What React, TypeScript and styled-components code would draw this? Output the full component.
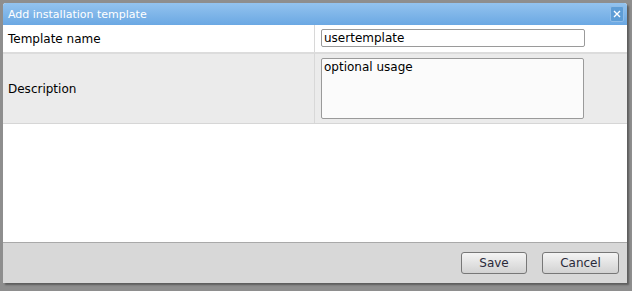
import React from "react";
import styled, { createGlobalStyle } from "styled-components";

const Global = createGlobalStyle`
  html, body { margin: 0; padding: 0; }
  body { width: 632px; height: 291px; overflow: hidden; background: #8f8f8f; font-family: "DejaVu Sans", Verdana, sans-serif; }
`;

const Backdrop = styled.div`
  width: 632px;
  height: 291px;
  padding: 3px 5px 0 3px;
  box-sizing: border-box;
  background: #8e8e8e;
`;

const Dialog = styled.div`
  width: 624px;
  height: 280px;
  background: #fff;
  display: flex;
  flex-direction: column;
  border-radius: 3px 3px 0 0;
  box-shadow: 2px 2px 2px rgba(0, 0, 0, 0.35);
  overflow: hidden;
`;

const TitleBar = styled.div`
  height: 22px;
  flex: none;
  display: flex;
  align-items: center;
  justify-content: space-between;
  padding: 0 3px 0 5px;
  background: linear-gradient(#93c3ef, #6ba8e3);
  color: #fff;
  font-size: 11px;
`;

const CloseBtn = styled.div`
  width: 12px;
  height: 14px;
  border-radius: 2px;
  background: #5e9dd6;
  border: 1px solid #8fbde8;
  display: flex;
  align-items: center;
  justify-content: center;
`;

const Table = styled.div`
  display: grid;
  grid-template-columns: 312px 1fr;
  border-bottom: 1px solid #d6d6d6;
`;

const Cell = styled.div<{ $gray?: boolean; $h: number; $label?: boolean }>`
  height: ${(p) => p.$h}px;
  box-sizing: border-box;
  background: ${(p) => (p.$gray ? "#ebebeb" : "#fff")};
  border-top: ${(p) => (p.$gray ? "2px solid #dcdcdc" : "none")};
  border-right: ${(p) => (p.$label ? "1px solid #d8d8d8" : "none")};
  display: flex;
  align-items: ${(p) => (p.$label ? "center" : "flex-start")};
  padding: ${(p) => (p.$label ? "0 0 0 5px" : "4px 0 0 6px")};
  font-size: 12px;
  color: #000;
`;

const TextInput = styled.div`
  width: 264px;
  height: 18px;
  box-sizing: border-box;
  border: 1px solid #9a9a9a;
  border-radius: 2px;
  padding: 0 0 0 2px;
  font-size: 12px;
  line-height: 16px;
  background: #fff;
`;

const TextArea = styled.div`
  width: 263px;
  height: 61px;
  box-sizing: border-box;
  border: 1px solid #9a9a9a;
  border-radius: 2px;
  padding: 0 0 0 2px;
  font-size: 12px;
  line-height: 16px;
  background: #fbfbfb;
`;

const Spacer = styled.div`
  flex: 1;
`;

const Footer = styled.div`
  height: 41px;
  flex: none;
  box-sizing: border-box;
  border-top: 1px solid #a9a9a9;
  background: #d8d8d8;
  display: flex;
  justify-content: flex-end;
  align-items: flex-start;
  gap: 15px;
  padding: 9px 8px 0 0;
`;

const Button = styled.button<{ $w: number }>`
  width: ${(p) => p.$w}px;
  height: 22px;
  border: 1px solid #777;
  border-radius: 3px;
  background: linear-gradient(#f4f4f4, #d2d2d2);
  font-family: "DejaVu Sans", Verdana, sans-serif;
  font-size: 12px;
  color: #2a2a3a;
  padding: 0;
`;

export default function App() {
  return (
    <>
      <Global />
      <Backdrop>
        <Dialog>
          <TitleBar>
            <span>Add installation template</span>
            <CloseBtn>
              <svg width="8" height="8" viewBox="0 0 8 8">
                <path d="M1 1L7 7M7 1L1 7" stroke="#fff" strokeWidth="1.4" />
              </svg>
            </CloseBtn>
          </TitleBar>
          <Table>
            <Cell $h={27} $label>Template name</Cell>
            <Cell $h={27}><TextInput>usertemplate</TextInput></Cell>
            <Cell $h={71} $gray $label>Description</Cell>
            <Cell $h={71} $gray><TextArea>optional usage</TextArea></Cell>
          </Table>
          <Spacer />
          <Footer>
            <Button $w={66}>Save</Button>
            <Button $w={77}>Cancel</Button>
          </Footer>
        </Dialog>
      </Backdrop>
    </>
  );
}
